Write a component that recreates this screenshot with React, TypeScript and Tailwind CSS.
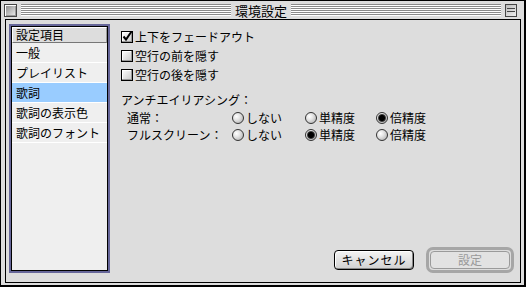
const listItems = ['一般', 'プレイリスト', '歌詞', '歌詞の表示色', '歌詞のフォント'];

function CheckBox({ checked }: { checked?: boolean }) {
  return (
    <div className="relative w-[12px] h-[12px] shrink-0 border border-black bg-[linear-gradient(135deg,#ffffff,#c8c8c8)] shadow-[inset_-1px_-1px_0_#999999,inset_1px_1px_0_#ffffff]">
      {checked && (
        <svg className="absolute -top-[2px] -left-[1px]" width="13" height="13" viewBox="0 0 13 13">
          <path d="M2.5 6.5 L5 9.5 L10.5 1.5" fill="none" stroke="#000" strokeWidth="2" />
        </svg>
      )}
    </div>
  );
}

function Radio({ on }: { on?: boolean }) {
  return (
    <div className="w-[12px] h-[12px] shrink-0 rounded-full border border-[#333333] bg-[radial-gradient(circle_at_35%_35%,#ffffff_0,#e6e6e6_35%,#a8a8a8_100%)] flex items-center justify-center">
      {on && (
        <div className="w-[8px] h-[8px] rounded-full bg-[radial-gradient(circle,#000000_0,#000000_45%,#555555_70%,#888888_100%)]" />
      )}
    </div>
  );
}

function Option({ label, on, width }: { label: string; on?: boolean; width: string }) {
  return (
    <div className={`flex items-center gap-[2px] ${width}`}>
      <Radio on={on} />
      <span>{label}</span>
    </div>
  );
}

function CheckRow({ label, checked }: { label: string; checked?: boolean }) {
  return (
    <div className="h-[19px] flex items-center gap-[2px]">
      <CheckBox checked={checked} />
      <span>{label}</span>
    </div>
  );
}

function RadioRow({ label, pick }: { label: string; pick: number }) {
  return (
    <div className="h-[17px] flex items-center pl-[6px]">
      <span className="w-[105px] shrink-0">{label}</span>
      <Option label="しない" on={pick === 0} width="w-[73px]" />
      <Option label="単精度" on={pick === 1} width="w-[71px]" />
      <Option label="倍精度" on={pick === 2} width="w-[70px]" />
    </div>
  );
}

export default function App() {
  return (
    <div className="w-[526px] h-[287px] font-['Noto_Sans_CJK_JP',sans-serif] text-[12px] leading-none text-black">
      <div className="w-[526px] h-[287px] border-t border-l border-r-2 border-b-2 border-black bg-[#dddddd] flex flex-col">
        {/* title bar */}
        <div className="h-[18px] shrink-0 flex items-center pl-[3px] pr-[7px]">
          <div className="w-[13px] h-[13px] shrink-0 border border-[#444444] bg-[linear-gradient(135deg,#888888,#eeeeee)] shadow-[inset_1px_1px_0_#ffffff,inset_-1px_-1px_0_#999999]" />
          <div className="flex-1 h-[12px] ml-[4px] bg-[repeating-linear-gradient(to_bottom,#8a8a8a_0px,#8a8a8a_1px,#ffffff_1px,#ffffff_2px)]" />
          <div className="px-[4px] text-[13px]">環境設定</div>
          <div className="flex-1 h-[12px] mr-[4px] bg-[repeating-linear-gradient(to_bottom,#8a8a8a_0px,#8a8a8a_1px,#ffffff_1px,#ffffff_2px)]" />
          <div className="w-[12px] h-[13px] shrink-0 border border-[#444444] bg-[linear-gradient(135deg,#bbbbbb,#eeeeee)] flex flex-col justify-center gap-[2px] px-[1px]">
            <div className="h-[1px] bg-[#444444]" />
            <div className="h-[1px] bg-[#444444]" />
          </div>
        </div>

        {/* content */}
        <div className="ml-[4px] mr-[3px] h-[264px] border border-black flex pt-[4px] pl-[3px] pr-[6px] pb-[9px]">
          {/* side list */}
          <div className="w-[101px] shrink-0 border-2 border-[#666699] flex">
            <div className="flex-1 border border-black bg-[#efefef] flex flex-col">
              <div className="h-[16px] shrink-0 flex items-center pl-[3px] bg-[#dddddd] border-t border-l border-white border-b border-r border-b-[#777777] border-r-[#999999]">
                設定項目
              </div>
              {listItems.map((item) => (
                <div
                  key={item}
                  className={`h-[20px] shrink-0 flex items-center pl-[4px] border-b border-white ${item === '歌詞' ? 'bg-[#99ccff]' : ''}`}
                >
                  {item}
                </div>
              ))}
            </div>
          </div>

          {/* settings */}
          <div className="flex-1 flex flex-col ml-[11px] pt-[3px]">
            <CheckRow label="上下をフェードアウト" checked />
            <CheckRow label="空行の前を隠す" />
            <CheckRow label="空行の後を隠す" />
            <div className="h-[18px] mt-[7px] flex items-center">アンチエイリアシング：</div>
            <RadioRow label="通常：" pick={2} />
            <RadioRow label="フルスクリーン：" pick={1} />

            <div className="mt-auto flex items-center justify-end gap-[12px]">
              <button className="w-[80px] h-[20px] rounded-[4px] border border-black bg-[linear-gradient(to_bottom,#f4f4f4,#d0d0d0)] shadow-[inset_1px_1px_0_#ffffff,inset_-1px_-1px_0_#888888] flex items-center justify-center tracking-[1px]">
                キャンセル
              </button>
              <div className="w-[88px] h-[26px] rounded-[7px] border-[3px] border-[#a6a6a6] p-[1px] flex">
                <div className="flex-1 rounded-[4px] border border-[#9a9a9a] bg-[#e2e2e2] flex items-center justify-center text-[#999999]">
                  設定
                </div>
              </div>
            </div>
          </div>
        </div>
      </div>
    </div>
  );
}
